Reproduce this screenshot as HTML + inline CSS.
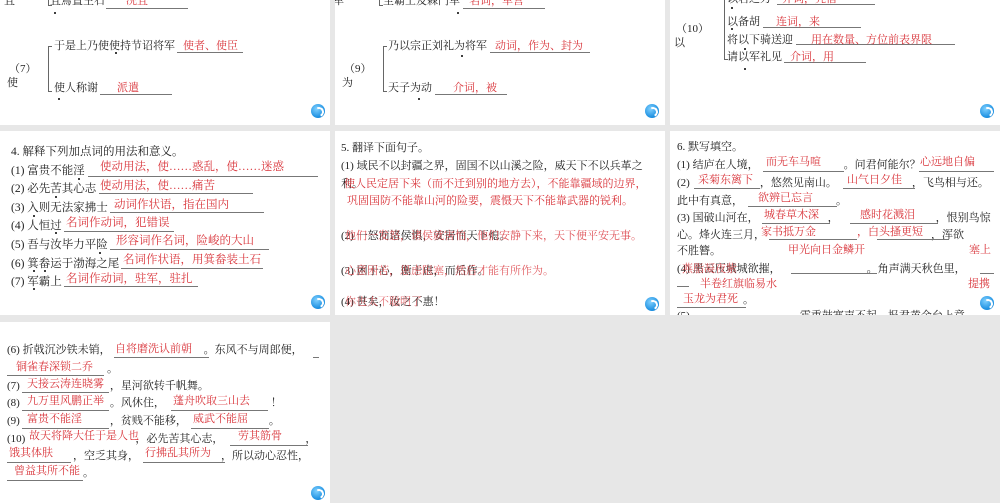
<!DOCTYPE html>
<html><head><meta charset="utf-8"><style>
body{margin:0;width:1000px;height:503px;background:#e7e7e7;position:relative;overflow:hidden;font-family:"Liberation Serif","Noto Serif CJK SC",serif;font-size:11px;color:#222}
.s{position:absolute;background:#fff;overflow:hidden}
.t{position:absolute;white-space:nowrap;line-height:14px}
.r{color:#d9343a}
.u{position:absolute;height:0;border-bottom:1px solid #777}
.d{position:absolute;width:2px;height:2px;background:#000;border-radius:1px}
.br{position:absolute;border:1px solid #666;border-right:none;width:3px}
.ic{position:absolute;width:14px;height:14px;border-radius:50%;background:radial-gradient(circle at 40% 35%,#7fd0ff,#1a8ee0 70%,#0d6fc0)}
.ic:after{content:"";position:absolute;left:3px;top:3px;width:6px;height:6px;border:2px solid #fff;border-left-color:transparent;border-bottom-color:transparent;border-radius:50%;transform:rotate(20deg)}
.w{font-size:11.5px}
</style></head><body>

<div class="s" style="left:0;top:0;width:330px;height:125px">
<div class="t" style="left:4px;top:-6px">且</div>
<div class="br" style="left:48px;top:-10px;height:14px"></div>
<div class="t" style="left:50px;top:-6px">且焉置主石</div>
<div class="u" style="left:106px;top:8px;width:82px"></div>
<div class="t r" style="left:126px;top:-6px">况且</div>
<div class="d" style="left:54px;top:12px"></div>
<div class="br" style="left:48px;top:46px;height:44px"></div>
<div class="t" style="left:54px;top:39px">于是上乃使使持节诏将军</div>
<div class="u" style="left:177px;top:52px;width:66px"></div>
<div class="t r" style="left:183px;top:39px">使者、使臣</div>
<div class="d" style="left:115px;top:52px"></div>
<div class="t" style="left:9px;top:62px">（7）</div>
<div class="t" style="left:7px;top:76px">使</div>
<div class="t" style="left:54px;top:81px">使人称谢</div>
<div class="u" style="left:100px;top:94px;width:72px"></div>
<div class="t r" style="left:117px;top:81px">派遣</div>
<div class="d" style="left:58px;top:98px"></div>
<div class="ic" style="left:311px;top:104px"></div>
</div>

<div class="s" style="left:335px;top:0;width:330px;height:125px">
<div class="t" style="left:-2px;top:-6px">军</div>
<div class="br" style="left:44px;top:-10px;height:14px"></div>
<div class="t" style="left:48px;top:-6px">至霸上及棘门军</div>
<div class="u" style="left:128px;top:8px;width:82px"></div>
<div class="t r" style="left:134px;top:-6px">名词，军营</div>
<div class="d" style="left:122px;top:12px"></div>
<div class="br" style="left:48px;top:46px;height:44px"></div>
<div class="t" style="left:53px;top:39px">乃以宗正刘礼为将军</div>
<div class="u" style="left:155px;top:52px;width:100px"></div>
<div class="t r" style="left:160px;top:39px">动词，作为、封为</div>
<div class="d" style="left:126px;top:55px"></div>
<div class="t" style="left:9px;top:62px">（9）</div>
<div class="t" style="left:7px;top:76px">为</div>
<div class="t" style="left:53px;top:81px">天子为动</div>
<div class="u" style="left:100px;top:94px;width:72px"></div>
<div class="t r" style="left:118px;top:81px">介词，被</div>
<div class="d" style="left:83px;top:98px"></div>
<div class="ic" style="left:310px;top:104px"></div>
</div>

<div class="s" style="left:670px;top:0;width:330px;height:125px">
<div class="br" style="left:54px;top:-4px;height:62px"></div>
<div class="t" style="left:57px;top:-8px">以君之力</div>
<div class="u" style="left:107px;top:4px;width:98px"></div>
<div class="t r" style="left:112px;top:-8px">介词，凭借</div>
<div class="d" style="left:61px;top:7px"></div>
<div class="t" style="left:57px;top:15px">以备胡</div>
<div class="u" style="left:93px;top:27px;width:98px"></div>
<div class="t r" style="left:106px;top:15px">连词，来</div>
<div class="d" style="left:61px;top:28px"></div>
<div class="t" style="left:57px;top:33px">将以下骑送迎</div>
<div class="u" style="left:126px;top:44px;width:159px"></div>
<div class="t r" style="left:141px;top:33px">用在数量、方位前表界限</div>
<div class="d" style="left:74px;top:48px"></div>
<div class="t" style="left:57px;top:50px">请以军礼见</div>
<div class="u" style="left:114px;top:62px;width:82px"></div>
<div class="t r" style="left:120px;top:50px">介词，用</div>
<div class="d" style="left:74px;top:68px"></div>
<div class="t" style="left:6px;top:22px">（10）</div>
<div class="t" style="left:4px;top:36px">以</div>
<div class="ic" style="left:310px;top:104px"></div>
</div>

<div class="s w" style="left:0;top:131px;width:330px;height:184px">
<div class="t" style="left:11px;top:14px">4. 解释下列加点词的用法和意义。</div>
<div class="t" style="left:11px;top:33px">(1) 富贵不能淫</div><div class="u" style="left:88px;top:45px;width:230px"></div><div class="t r" style="left:100px;top:29px">使动用法，使……惑乱，使……迷惑</div><div class="d" style="left:78px;top:47px"></div>
<div class="t" style="left:11px;top:51px">(2) 必先苦其心志</div><div class="u" style="left:99px;top:62px;width:154px"></div><div class="t r" style="left:100px;top:48px">使动用法，使……痛苦</div><div class="d" style="left:55px;top:65px"></div>
<div class="t" style="left:11px;top:70px">(3) 入则无法家拂士</div><div class="u" style="left:110px;top:81px;width:154px"></div><div class="t r" style="left:114px;top:67px">动词作状语，指在国内</div><div class="d" style="left:33px;top:84px"></div>
<div class="t" style="left:11px;top:88px">(4) 人恒过</div><div class="u" style="left:64px;top:100px;width:110px"></div><div class="t r" style="left:66px;top:85px">名词作动词，犯错误</div><div class="d" style="left:55px;top:101px"></div>
<div class="t" style="left:11px;top:107px">(5) 吾与汝毕力平险</div><div class="u" style="left:110px;top:118px;width:159px"></div><div class="t r" style="left:116px;top:103px">形容词作名词，险峻的大山</div><div class="d" style="left:99px;top:121px"></div>
<div class="t" style="left:11px;top:126px">(6) 箕畚运于渤海之尾</div><div class="u" style="left:121px;top:137px;width:142px"></div><div class="t r" style="left:123px;top:122px">名词作状语，用箕畚装土石</div><div class="d" style="left:33px;top:139px"></div><div class="d" style="left:44px;top:139px"></div>
<div class="t" style="left:11px;top:144px">(7) 军霸上</div><div class="u" style="left:64px;top:155px;width:134px"></div><div class="t r" style="left:66px;top:141px">名词作动词，驻军，驻扎</div><div class="d" style="left:33px;top:157px"></div>
<div class="ic" style="left:311px;top:164px"></div>
</div>

<div class="s" style="left:335px;top:131px;width:330px;height:184px">
<div class="t" style="left:6px;top:10px">5. 翻译下面句子。</div>
<div class="t" style="left:6px;top:28px">(1) 域民不以封疆之界，固国不以山溪之险，威天下不以兵革之</div>
<div class="t" style="left:6px;top:46px">利。</div>
<div class="t r" style="left:9px;top:46px">使人民定居下来（而不迁到别的地方去），不能靠疆域的边界，</div>
<div class="t r" style="left:12px;top:63px">巩固国防不能靠山河的险要，震慑天下不能靠武器的锐利。</div>
<div class="t" style="left:6px;top:98px">(2) 一怒而诸侯惧，安居而天下熄。</div>
<div class="t r" style="left:10px;top:98px;opacity:.85">他们一发怒，诸侯就害怕，他们安静下来，天下便平安无事。</div>
<div class="t" style="left:6px;top:133px">(3) 困于心，衡于虑，而后作。</div>
<div class="t r" style="left:10px;top:133px;opacity:.8">心意困苦，思虑阻塞，然后才能有所作为。</div>
<div class="t" style="left:6px;top:164px">(4) 甚矣，汝之不惠！</div>
<div class="t r" style="left:10px;top:164px;opacity:.7">你也太不聪明了</div>
<div class="ic" style="left:310px;top:166px"></div>
</div>

<div class="s" style="left:670px;top:131px;width:330px;height:184px">
<div class="t" style="left:7px;top:9px">6. 默写填空。</div>
<div class="t" style="left:7px;top:27px">(1) 结庐在人境，<span style="display:inline-block;width:85px"></span>。问君何能尔？<span style="display:inline-block;width:80px"></span>。</div>
<div class="u" style="left:93px;top:40px;width:81px"></div><div class="t r" style="left:96px;top:24px">而无车马喧</div>
<div class="u" style="left:249px;top:40px;width:75px"></div><div class="t r" style="left:250px;top:24px">心远地自偏</div>
<div class="t" style="left:7px;top:45px">(2)<span style="display:inline-block;width:70px"></span>，悠然见南山。<span style="display:inline-block;width:75px"></span>，飞鸟相与还。</div>
<div class="u" style="left:24px;top:57px;width:66px"></div><div class="t r" style="left:28px;top:42px">采菊东篱下</div>
<div class="u" style="left:173px;top:57px;width:72px"></div><div class="t r" style="left:177px;top:42px">山气日夕佳</div>
<div class="t" style="left:7px;top:63px">此中有真意，<span style="display:inline-block;width:93px"></span>。</div>
<div class="u" style="left:78px;top:75px;width:89px"></div><div class="t r" style="left:88px;top:60px">欲辨已忘言</div>
<div class="t" style="left:7px;top:80px">(3) 国破山河在，<span style="display:inline-block;width:69px"></span>，<span style="display:inline-block;width:97px"></span>，恨别鸟惊</div>
<div class="u" style="left:92px;top:92px;width:68px"></div><div class="t r" style="left:94px;top:77px">城春草木深</div>
<div class="u" style="left:180px;top:92px;width:88px"></div><div class="t r" style="left:190px;top:77px">感时花溅泪</div>
<div class="t" style="left:7px;top:97px">心。烽火连三月，<span style="display:inline-block;width:166px"></span>，浑欲</div>
<div class="u" style="left:99px;top:108px;width:88px"></div><div class="t r" style="left:91px;top:94px">家书抵万金</div>
<div class="u" style="left:207px;top:108px;width:72px"></div><div class="t r" style="left:187px;top:94px">，白头搔更短</div>
<div class="t" style="left:7px;top:113px">不胜簪。</div>
<div class="t r" style="left:118px;top:112px">甲光向日金鳞开</div><div class="t r" style="left:299px;top:112px">塞上</div>
<div class="t" style="left:7px;top:131px">(4) 黑云压城城欲摧，<span style="display:inline-block;width:86px"></span>。角声满天秋色里，</div>
<div class="t r" style="left:12px;top:131px;opacity:.8">燕脂凝夜紫</div>
<div class="u" style="left:121px;top:142px;width:86px"></div>
<div class="u" style="left:310px;top:142px;width:14px"></div>
<div class="u" style="left:7px;top:155px;width:12px"></div>
<div class="t r" style="left:30px;top:146px">半卷红旗临易水</div><div class="t r" style="left:298px;top:146px">提携</div>
<div class="t" style="left:7px;top:162px"><span style="display:inline-block;width:66px"></span>。</div>
<div class="u" style="left:7px;top:176px;width:69px"></div><div class="t r" style="left:13px;top:161px">玉龙为君死</div>
<div class="t" style="left:7px;top:178px">(5)<span style="display:inline-block;width:110px"></span>霜重鼓寒声不起。报君黄金台上意，</div>
<div class="ic" style="left:310px;top:165px"></div>
</div>

<div class="s" style="left:0;top:322px;width:330px;height:181px">
<div class="t" style="left:7px;top:21px">(6) 折戟沉沙铁未销，<span style="display:inline-block;width:93px"></span>。东风不与周郎便，</div>
<div class="u" style="left:114px;top:35px;width:95px"></div><div class="t r" style="left:115px;top:20px">自将磨洗认前朝</div>
<div class="u" style="left:313px;top:35px;width:6px"></div>
<div class="t" style="left:7px;top:40px"><span style="display:inline-block;width:100px"></span>。</div>
<div class="u" style="left:7px;top:53px;width:97px"></div><div class="t r" style="left:16px;top:38px">铜雀春深锁二乔</div>
<div class="t" style="left:7px;top:57px">(7)<span style="display:inline-block;width:90px"></span>，星河欲转千帆舞。</div>
<div class="u" style="left:22px;top:70px;width:87px"></div><div class="t r" style="left:27px;top:55px">天接云涛连晓雾</div>
<div class="t" style="left:7px;top:74px">(8)<span style="display:inline-block;width:90px"></span>。风休住，<span style="display:inline-block;width:106px"></span>！</div>
<div class="u" style="left:22px;top:88px;width:87px"></div><div class="t r" style="left:27px;top:72px">九万里风鹏正举</div>
<div class="u" style="left:171px;top:88px;width:97px"></div><div class="t r" style="left:173px;top:72px">蓬舟吹取三山去</div>
<div class="t" style="left:7px;top:92px">(9)<span style="display:inline-block;width:90px"></span>，贫贱不能移，<span style="display:inline-block;width:82px"></span>。</div>
<div class="u" style="left:22px;top:106px;width:87px"></div><div class="t r" style="left:27px;top:90px">富贵不能淫</div>
<div class="u" style="left:191px;top:106px;width:78px"></div><div class="t r" style="left:193px;top:90px">威武不能屈</div>
<div class="t" style="left:7px;top:110px">(10)<span style="display:inline-block;width:110px"></span>，必先苦其心志，<span style="display:inline-block;width:82px"></span>，</div>
<div class="t r" style="left:29px;top:107px">故天将降大任于是人也</div>
<div class="u" style="left:230px;top:123px;width:78px"></div><div class="t r" style="left:238px;top:107px">劳其筋骨</div>
<div class="t" style="left:7px;top:127px"><span style="display:inline-block;width:66px"></span>，空乏其身，<span style="display:inline-block;width:82px"></span>，所以动心忍性，</div>
<div class="u" style="left:7px;top:140px;width:64px"></div><div class="t r" style="left:9px;top:124px">饿其体肤</div>
<div class="u" style="left:143px;top:140px;width:82px"></div><div class="t r" style="left:145px;top:124px">行拂乱其所为</div>
<div class="t" style="left:7px;top:144px"><span style="display:inline-block;width:76px"></span>。</div>
<div class="u" style="left:7px;top:158px;width:76px"></div><div class="t r" style="left:14px;top:142px">曾益其所不能</div>
<div class="ic" style="left:311px;top:164px"></div>
</div>

</body></html>
